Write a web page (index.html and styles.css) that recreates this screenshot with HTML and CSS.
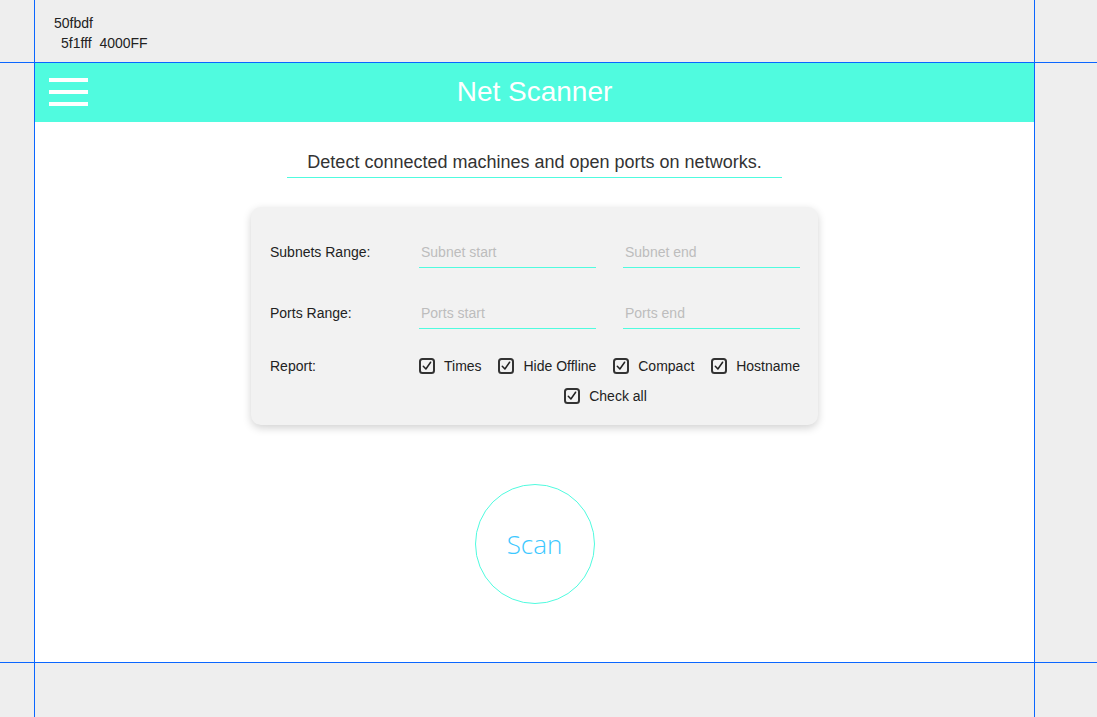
FILE: index.html
```html
<!DOCTYPE html>
<html>
<head>
<meta charset="utf-8">
<link rel="stylesheet" href="styles.css">
</head>
<body>
<div class="notes">
  <div class="note-1">50fbdf</div>
  <div class="note-2">5f1fff&nbsp;&nbsp;4000FF</div>
</div>
<div class="app">
  <header class="topbar">
    <div class="burger"><span></span><span></span><span></span></div>
    <h1 class="title">Net Scanner</h1>
  </header>
  <main class="content">
    <p class="subtitle">Detect connected machines and open ports on networks.</p>
    <section class="card">
      <div class="row">
        <label class="label">Subnets Range:</label>
        <div class="inputs">
          <input class="field" placeholder="Subnet start">
          <input class="field" placeholder="Subnet end">
        </div>
      </div>
      <div class="row">
        <label class="label">Ports Range:</label>
        <div class="inputs">
          <input class="field" placeholder="Ports start">
          <input class="field" placeholder="Ports end">
        </div>
      </div>
      <div class="row report">
        <label class="label">Report:</label>
        <div class="checks">
          <div class="check-line spread">
            <span class="check"><svg class="box" viewBox="0 0 16 16"><rect x="1" y="1" width="14" height="14" rx="2.5"/><path d="M4.3 8.2 L6.9 11 L11.6 4.2"/></svg>Times</span>
            <span class="check"><svg class="box" viewBox="0 0 16 16"><rect x="1" y="1" width="14" height="14" rx="2.5"/><path d="M4.3 8.2 L6.9 11 L11.6 4.2"/></svg>Hide Offline</span>
            <span class="check"><svg class="box" viewBox="0 0 16 16"><rect x="1" y="1" width="14" height="14" rx="2.5"/><path d="M4.3 8.2 L6.9 11 L11.6 4.2"/></svg>Compact</span>
            <span class="check"><svg class="box" viewBox="0 0 16 16"><rect x="1" y="1" width="14" height="14" rx="2.5"/><path d="M4.3 8.2 L6.9 11 L11.6 4.2"/></svg>Hostname</span>
          </div>
          <div class="check-line center">
            <span class="check"><svg class="box" viewBox="0 0 16 16"><rect x="1" y="1" width="14" height="14" rx="2.5"/><path d="M4.3 8.2 L6.9 11 L11.6 4.2"/></svg>Check all</span>
          </div>
        </div>
      </div>
    </section>
    <button class="scan">Scan</button>
  </main>
</div>
<div class="guide v g-left"></div>
<div class="guide v g-right"></div>
<div class="guide h g-top"></div>
<div class="guide h g-bottom"></div>
</body>
</html>
```

FILE: styles.css
```css
html, body {
  margin: 0;
  padding: 0;
}
body {
  background: #eeeeee;
  font-family: "Liberation Sans", Arial, sans-serif;
  color: #222;
  width: 1097px;
  height: 717px;
  overflow: hidden;
  position: relative;
}
.notes {
  height: 63px;
  box-sizing: border-box;
  padding: 13px 0 0 54px;
  font-size: 14px;
  line-height: 20px;
  color: #222;
}
.note-2 {
  padding-left: 7px;
}
.app {
  margin-left: 35px;
  width: 999px;
  height: 599px;
  background: #ffffff;
  display: flex;
  flex-direction: column;
}
.topbar {
  height: 59px;
  background: #50fbdf;
  position: relative;
  display: flex;
  align-items: center;
  justify-content: center;
}
.burger {
  position: absolute;
  left: 14px;
  top: 15px;
  display: flex;
  flex-direction: column;
  gap: 8px;
}
.burger span {
  display: block;
  width: 39px;
  height: 4px;
  background: #fff;
}
.title {
  margin: 0 0 2px;
  font-weight: normal;
  font-size: 28px;
  color: #fff;
  line-height: 32px;
}
.content {
  display: flex;
  flex-direction: column;
  align-items: center;
}
.subtitle {
  margin: 28px 0 0;
  width: 495px;
  text-align: center;
  font-size: 18px;
  line-height: 24px;
  color: #333;
  padding-bottom: 3px;
  border-bottom: 1px solid #50fbdf;
}
.card {
  margin-top: 29px;
  width: 567px;
  box-sizing: border-box;
  background: #f2f2f2;
  border-radius: 10px;
  box-shadow: 0 3px 8px rgba(0, 0, 0, 0.18);
  padding: 29px 18px 20px 19px;
  display: flex;
  flex-direction: column;
  gap: 29px;
}
.row {
  display: flex;
  align-items: center;
}
.label {
  width: 149px;
  font-size: 14px;
  color: #222;
}
.inputs {
  display: flex;
  gap: 27px;
}
.field {
  width: 177px;
  height: 32px;
  box-sizing: border-box;
  border: none;
  border-bottom: 1px solid #50fbdf;
  background: transparent;
  padding: 0 2px;
  font-family: "Liberation Sans", Arial, sans-serif;
  font-size: 14px;
  outline: none;
}
.field::placeholder {
  color: #bdbdbd;
}
.report {
  align-items: flex-start;
  margin-top: -1px;
}
.report .label {
  line-height: 18px;
}
.checks {
  width: 381px;
  display: flex;
  flex-direction: column;
  gap: 12px;
}
.check-line {
  display: flex;
  height: 18px;
  align-items: center;
}
.spread {
  justify-content: space-between;
}
.center {
  justify-content: center;
  padding-right: 8px;
}
.check {
  display: inline-flex;
  align-items: center;
  gap: 9px;
  font-size: 14px;
  color: #222;
  white-space: nowrap;
}
.box {
  width: 16px;
  height: 16px;
  flex: none;
}
.box rect {
  fill: none;
  stroke: #333;
  stroke-width: 2;
}
.box path {
  fill: none;
  stroke: #222;
  stroke-width: 1.5;
  stroke-linecap: round;
  stroke-linejoin: round;
}
.scan {
  margin-top: 59px;
  width: 120px;
  height: 120px;
  border-radius: 50%;
  border: 1px solid #50fbdf;
  background: #fff;
  color: #3cc8ff;
  font-family: "Open Sans", sans-serif;
  font-weight: 300;
  font-size: 26px;
  padding: 0;
  cursor: pointer;
}
.guide {
  position: absolute;
  background: #0a66ff;
}
.guide.v {
  top: 0;
  width: 1px;
  height: 717px;
}
.guide.h {
  left: 0;
  height: 1px;
  width: 1097px;
}
.g-left { left: 34px; }
.g-right { left: 1034px; }
.g-top { top: 62px; }
.g-bottom { top: 662px; }
```
